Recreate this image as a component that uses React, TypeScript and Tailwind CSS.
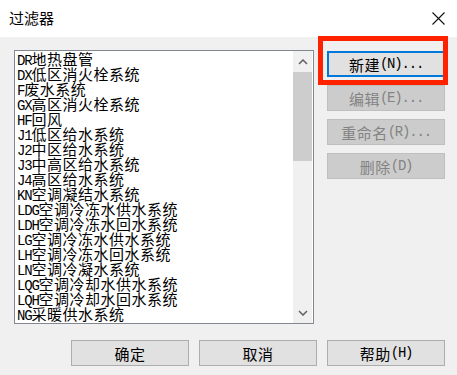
import React from 'react';

const ITEMS = [
  'DR地热盘管',
  'DX低区消火栓系统',
  'F废水系统',
  'GX高区消火栓系统',
  'HF回风',
  'J1低区给水系统',
  'J2中区给水系统',
  'J3中高区给水系统',
  'J4高区给水系统',
  'KN空调凝结水系统',
  'LDG空调冷冻水供水系统',
  'LDH空调冷冻水回水系统',
  'LG空调冷冻水供水系统',
  'LH空调冷冻水回水系统',
  'LN空调冷凝水系统',
  'LQG空调冷却水供水系统',
  'LQH空调冷却水回水系统',
  'NG采暖供水系统',
];

// SimSun-like text: half-width latin in mono, CJK in Noto
const Mixed = ({ text }: { text: string }) => {
  const runs = text.match(/[\x00-\x7f]+|[^\x00-\x7f]+/g) || [];
  return (
    <>
      {runs.map((r, i) =>
        /^[\x00-\x7f]/.test(r) ? (
          <span key={i} className="font-['Liberation_Mono',monospace] text-[14px] tracking-[-1.2px]">{r}</span>
        ) : (
          <span key={i} className="font-['Noto_Sans_CJK_SC',sans-serif] text-[15px] tracking-[0.5px]">{r}</span>
        )
      )}
    </>
  );
};

const Btn = ({ label, kind = 'normal' }: { label: string; kind?: 'normal' | 'default' | 'disabled' }) => {
  const cls =
    kind === 'default'
      ? 'border-2 border-[#0078d7] bg-[#e1e1e1] text-black'
      : kind === 'disabled'
      ? 'border border-[#bfbfbf] bg-[#cccccc] text-[#838383]'
      : 'border border-[#adadad] bg-[#e1e1e1] text-black';
  return (
    <div className={`w-[118px] h-[26px] flex items-center justify-center leading-[15px] whitespace-nowrap ${cls}`}>
      <Mixed text={label} />
    </div>
  );
};

const Chevron = ({ up }: { up?: boolean }) => (
  <svg width="10" height="6" viewBox="0 0 10 6">
    <polyline
      points={up ? '1,5 5,1 9,5' : '1,1 5,5 9,1'}
      fill="none"
      stroke="#606060"
      strokeWidth="1.5"
    />
  </svg>
);

export default function App() {
  return (
    <div className="relative w-[457px] h-[375px] bg-[#f0f0f0] flex flex-col overflow-hidden">
      {/* Title bar */}
      <div className="h-[37px] bg-white flex items-center justify-between pl-[9px] pr-[12px] shrink-0">
        <span className="font-['Noto_Sans_CJK_SC',sans-serif] text-[15px] text-black">过滤器</span>
        <svg width="13" height="13" viewBox="0 0 13 13">
          <path d="M0.5 0.5 L12.5 12.5 M12.5 0.5 L0.5 12.5" stroke="#111" strokeWidth="1.1" />
        </svg>
      </div>

      <div className="flex pt-[13px] pl-[14px] gap-[13px]">
        {/* List box */}
        <div className="w-[300px] h-[274px] border border-[#828790] bg-white flex">
          <div className="flex-1 pl-[2px] overflow-hidden text-black">
            {ITEMS.map((it) => (
              <div key={it} className="h-[15px] leading-[15px] whitespace-nowrap">
                <Mixed text={it} />
              </div>
            ))}
          </div>
          <div className="w-[19px] mr-px bg-[#f0f0f0] flex flex-col">
            <div className="h-[21px] flex items-center justify-center">
              <Chevron up />
            </div>
            <div className="h-[89px] bg-[#cdcdcd]" />
            <div className="flex-1" />
            <div className="h-[21px] flex items-center justify-center">
              <Chevron />
            </div>
          </div>
        </div>

        {/* Side buttons */}
        <div className="flex flex-col gap-[8px] pt-px">
          <Btn label="新建(N)..." kind="default" />
          <Btn label="编辑(E)..." kind="disabled" />
          <Btn label="重命名(R)..." kind="disabled" />
          <Btn label="删除(D)" kind="disabled" />
        </div>
      </div>

      {/* Bottom buttons */}
      <div className="flex justify-end gap-[10px] pr-[12px] mt-[16px]">
        <Btn label="确定" />
        <Btn label="取消" />
        <Btn label="帮助(H)" />
      </div>

      {/* Red highlight annotation */}
      <div className="absolute left-[318px] top-[36px] w-[130px] h-[49px] border-[5px] border-[#ff2200]" />
    </div>
  );
}
